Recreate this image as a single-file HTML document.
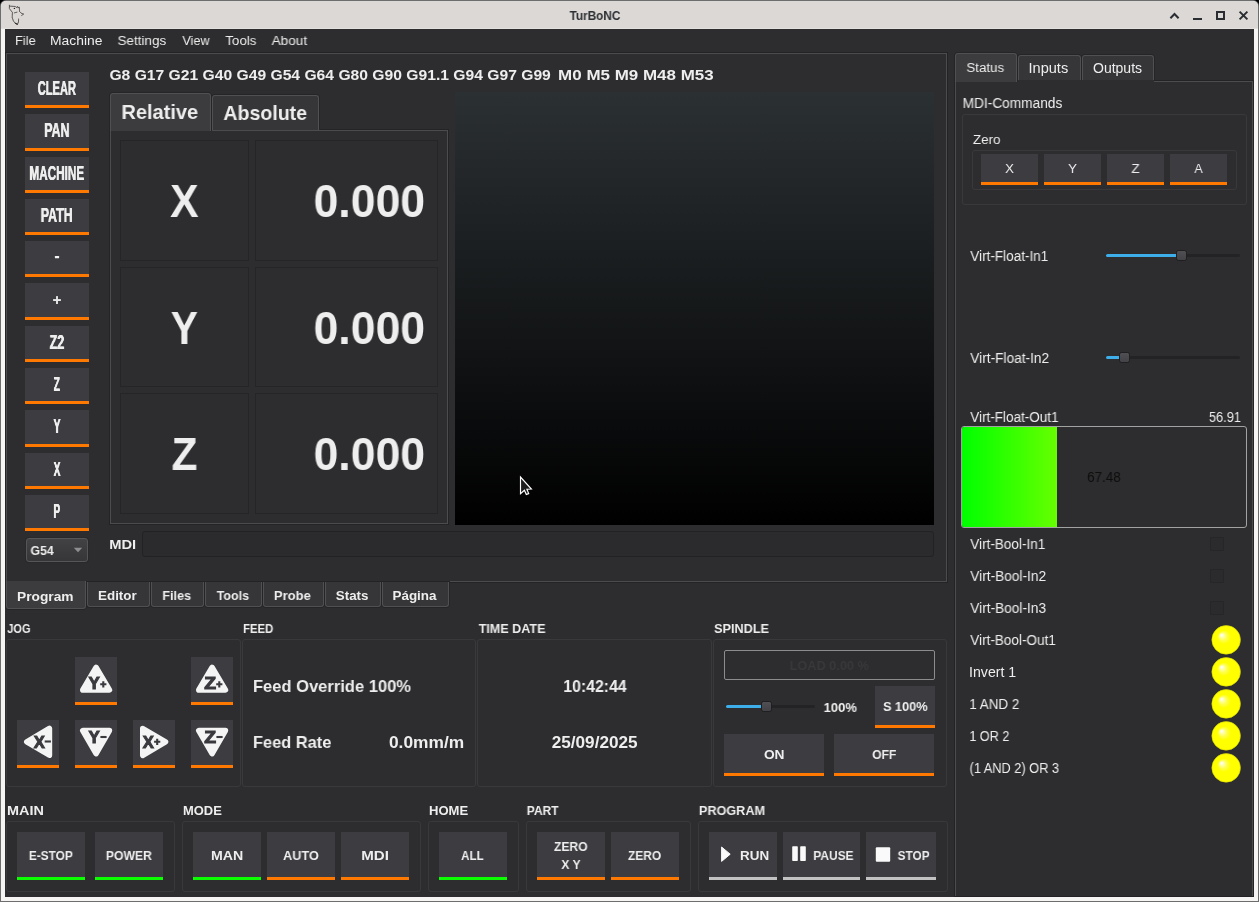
<!DOCTYPE html>
<html><head><meta charset="utf-8"><title>TurBoNC</title>
<style>
html,body{margin:0;padding:0;}
body{width:1259px;height:902px;position:relative;overflow:hidden;background:#000;font-family:"Liberation Sans",sans-serif;color:#eeeeee;}
div,span.t,svg{position:absolute;box-sizing:content-box;}
svg{will-change:transform;}
span.t{white-space:pre;transform-origin:0 50%;display:block;will-change:transform;}
</style></head><body>
<div style="left:0px;top:0px;width:1259px;height:902px;background:#6d6d6d;"></div>
<div style="left:0px;top:0px;width:6px;height:6px;background:#000;"></div>
<div style="left:1253px;top:0px;width:6px;height:6px;background:#000;"></div>
<div style="left:0px;top:0px;width:1259px;height:40px;background:#6d6d6d;border-radius:6px 6px 0 0;"></div>
<div style="left:1px;top:1px;width:1257px;height:900px;background:#f6f5f4;border-radius:5px 5px 0 0;"></div>
<div style="left:1px;top:1px;width:1257px;height:28px;background:#dbd8d5;border-radius:5px 5px 0 0;"></div>
<div style="left:1px;top:28px;width:1257px;height:1px;background:#e3e0dd;"></div>
<div style="left:5px;top:29px;width:1249px;height:868px;background:#2d2d2f;"></div>
<svg style="left:6px;top:2px" width="22" height="26" viewBox="6 2 22 26"><g fill="none" stroke="#2e2e2e" stroke-width="0.7" stroke-linecap="round" stroke-linejoin="round" stroke-dasharray="2.2 0.5"><path d="M9.4 5.2 L9.4 8.6 L12.4 12.4 L12.2 17.4 L13.4 21 L15.4 23.4 L17.4 24.4 L18.5 22 L18.6 19"/><path d="M9.6 6.1 L15.2 6.5 L17 7.6 L17.6 6.4 L18.2 7.8 L19.4 7.2 L19.5 11.4 L21.4 13.3 L23.6 14.1 L21.6 15.5"/><path d="M14.3 12.9 L17 12.2" stroke-width="0.9" stroke="#555"/><path d="M15.4 23.3 L17.6 24.3" stroke-width="1.1"/></g><circle cx="14.4" cy="8.4" r="0.7" fill="#222"/></svg>
<span class="t" style="left:569px;top:9px;font-size:12.65px;line-height:14px;font-weight:bold;color:#2b2f33;transform:translateX(0.62px) scaleX(0.9293);">TurBoNC</span>
<svg style="left:1160px;top:5px" width="96" height="22" viewBox="1160 5 96 22"><g fill="none" stroke="#2a2e32" stroke-width="2"><path d="M1170.4 18.2 L1174.5 14 L1178.6 18.2"/><path d="M1193 19 L1202 19"/><rect x="1217" y="12" width="7" height="7"/><path d="M1239.6 11.6 L1247.4 19.4 M1247.4 11.6 L1239.6 19.4"/></g></svg>
<span class="t" style="left:14px;top:33px;font-size:13.66px;line-height:15px;font-weight:normal;transform:translateX(1.00px) scaleX(0.9389);">File</span>
<span class="t" style="left:50px;top:33px;font-size:13.66px;line-height:15px;font-weight:normal;transform:translateX(0.01px) scaleX(1.0145);">Machine</span>
<span class="t" style="left:117px;top:33px;font-size:13.66px;line-height:15px;font-weight:normal;transform:translateX(0.53px) scaleX(0.9877);">Settings</span>
<span class="t" style="left:182px;top:33px;font-size:13.66px;line-height:15px;font-weight:normal;transform:translateX(0.39px) scaleX(0.9260);">View</span>
<span class="t" style="left:225px;top:33px;font-size:13.66px;line-height:15px;font-weight:normal;transform:translateX(0.36px) scaleX(0.9728);">Tools</span>
<span class="t" style="left:271px;top:33px;font-size:13.66px;line-height:15px;font-weight:normal;transform:translateX(0.62px) scaleX(0.9936);">About</span>
<div style="left:5px;top:52px;width:943px;height:1px;background:#232325;"></div>
<div style="left:6px;top:53px;width:941px;height:1px;background:#4c4c4e;"></div>
<div style="left:6px;top:53px;width:1px;height:529px;background:#4c4c4e;"></div>
<div style="left:946px;top:53px;width:1px;height:529px;background:#4c4c4e;"></div>
<div style="left:947px;top:53px;width:1px;height:530px;background:#232325;"></div>
<div style="left:5px;top:53px;width:1px;height:529px;background:#232325;"></div>
<div style="left:86px;top:581px;width:364px;height:1px;background:#232325;"></div>
<div style="left:450px;top:581px;width:497px;height:1px;background:#4c4c4e;"></div>
<div style="left:450px;top:582px;width:498px;height:1px;background:#232325;"></div>
<div style="left:25px;top:72px;width:64px;height:33px;background:#3d3c41;"></div>
<div style="left:25px;top:105px;width:64px;height:3px;background:#ff7900;"></div>
<span class="t" style="left:37px;top:78px;font-size:19.33px;line-height:21px;font-weight:bold;transform:translateX(0.74px) scaleX(0.5743);text-shadow:0.4px 0 0 #eee,-0.4px 0 0 #eee;">CLEAR</span>
<div style="left:25px;top:114px;width:64px;height:34px;background:#3d3c41;"></div>
<div style="left:25px;top:148px;width:64px;height:3px;background:#ff7900;"></div>
<span class="t" style="left:44px;top:120px;font-size:19.33px;line-height:21px;font-weight:bold;transform:translateX(0.17px) scaleX(0.6429);text-shadow:0.4px 0 0 #eee,-0.4px 0 0 #eee;">PAN</span>
<div style="left:25px;top:157px;width:64px;height:33px;background:#3d3c41;"></div>
<div style="left:25px;top:190px;width:64px;height:3px;background:#ff7900;"></div>
<span class="t" style="left:29px;top:163px;font-size:19.33px;line-height:21px;font-weight:bold;transform:translateX(0.41px) scaleX(0.6073);text-shadow:0.4px 0 0 #eee,-0.4px 0 0 #eee;">MACHINE</span>
<div style="left:25px;top:199px;width:64px;height:33px;background:#3d3c41;"></div>
<div style="left:25px;top:232px;width:64px;height:3px;background:#ff7900;"></div>
<span class="t" style="left:40px;top:205px;font-size:19.33px;line-height:21px;font-weight:bold;transform:translateX(0.77px) scaleX(0.6392);text-shadow:0.4px 0 0 #eee,-0.4px 0 0 #eee;">PATH</span>
<div style="left:25px;top:241px;width:64px;height:33px;background:#3d3c41;"></div>
<div style="left:25px;top:274px;width:64px;height:3px;background:#ff7900;"></div>
<div style="left:25px;top:283px;width:64px;height:34px;background:#3d3c41;"></div>
<div style="left:25px;top:317px;width:64px;height:3px;background:#ff7900;"></div>
<div style="left:25px;top:326px;width:64px;height:33px;background:#3d3c41;"></div>
<div style="left:25px;top:359px;width:64px;height:3px;background:#ff7900;"></div>
<span class="t" style="left:49px;top:332px;font-size:19.33px;line-height:21px;font-weight:bold;transform:translateX(0.63px) scaleX(0.6437);text-shadow:0.4px 0 0 #eee,-0.4px 0 0 #eee;">Z2</span>
<div style="left:25px;top:368px;width:64px;height:33px;background:#3d3c41;"></div>
<div style="left:25px;top:401px;width:64px;height:3px;background:#ff7900;"></div>
<span class="t" style="left:53px;top:374px;font-size:19.33px;line-height:21px;font-weight:bold;transform:translateX(0.69px) scaleX(0.5295);text-shadow:0.4px 0 0 #eee,-0.4px 0 0 #eee;">Z</span>
<div style="left:25px;top:410px;width:64px;height:34px;background:#3d3c41;"></div>
<div style="left:25px;top:444px;width:64px;height:3px;background:#ff7900;"></div>
<span class="t" style="left:53px;top:416px;font-size:19.33px;line-height:21px;font-weight:bold;transform:translateX(0.52px) scaleX(0.5426);text-shadow:0.4px 0 0 #eee,-0.4px 0 0 #eee;">Y</span>
<div style="left:25px;top:453px;width:64px;height:33px;background:#3d3c41;"></div>
<div style="left:25px;top:486px;width:64px;height:3px;background:#ff7900;"></div>
<span class="t" style="left:53px;top:459px;font-size:19.33px;line-height:21px;font-weight:bold;transform:translateX(0.61px) scaleX(0.5300);text-shadow:0.4px 0 0 #eee,-0.4px 0 0 #eee;">X</span>
<div style="left:25px;top:495px;width:64px;height:33px;background:#3d3c41;"></div>
<div style="left:25px;top:528px;width:64px;height:3px;background:#ff7900;"></div>
<span class="t" style="left:53px;top:501px;font-size:19.33px;line-height:21px;font-weight:bold;transform:translateX(0.65px) scaleX(0.4981);text-shadow:0.4px 0 0 #eee,-0.4px 0 0 #eee;">P</span>
<svg style="left:50px;top:250px" width="14" height="60" viewBox="50 250 14 60"><rect x="54.9" y="255.9" width="4.2" height="2.3" rx="0.5" fill="#f4f4f4"/><rect x="53.1" y="299.1" width="7.8" height="1.9" fill="#e6e6e6"/><rect x="56.05" y="296.1" width="1.9" height="7.9" fill="#e6e6e6"/></svg>
<span class="t" style="left:109px;top:66px;font-size:15.55px;line-height:17px;font-weight:bold;transform:translateX(0.41px) scaleX(1.0074);">G8 G17 G21 G40 G49 G54 G64 G80 G90 G91.1 G94 G97 G99</span>
<span class="t" style="left:558px;top:66px;font-size:15.55px;line-height:17px;font-weight:bold;transform:translateX(0.11px) scaleX(1.0912);">M0 M5 M9 M48 M53</span>
<div style="left:109px;top:129px;width:338px;height:394px;border:1px solid #232325;"></div>
<div style="left:110px;top:130px;width:336px;height:392px;border:1px solid #4c4c4e;"></div>
<div style="left:212px;top:95px;width:105px;height:34px;background:#363638;border:1px solid #505052;border-bottom:none;border-radius:3px 3px 0 0;box-shadow:0 -1px 0 #252527,1px 0 0 #252527,-1px 0 0 #252527;"></div>
<div style="left:110px;top:93px;width:99px;height:37px;background:#3c3c3e;border:1px solid #505052;border-bottom:none;border-radius:3px 3px 0 0;box-shadow:0 -1px 0 #252527,1px 0 0 #252527,-1px 0 0 #252527;"></div>
<span class="t" style="left:121px;top:100px;font-size:20.78px;line-height:23px;font-weight:bold;transform:translateX(0.41px) scaleX(0.9644);">Relative</span>
<span class="t" style="left:223px;top:101px;font-size:20.78px;line-height:23px;font-weight:bold;transform:translateX(0.36px) scaleX(0.9425);">Absolute</span>
<div style="left:120px;top:140px;width:127px;height:119px;border:1px solid #252527;"></div>
<div style="left:255px;top:140px;width:181px;height:119px;border:1px solid #252527;"></div>
<span class="t" style="left:170px;top:176px;font-size:45.64px;line-height:51px;font-weight:bold;transform:translateX(0.07px) scaleX(0.9369);">X</span>
<span class="t" style="left:313px;top:176px;font-size:45.64px;line-height:51px;font-weight:bold;transform:translateX(0.57px) scaleX(0.9770);">0.000</span>
<div style="left:120px;top:267px;width:127px;height:118px;border:1px solid #252527;"></div>
<div style="left:255px;top:267px;width:181px;height:118px;border:1px solid #252527;"></div>
<span class="t" style="left:170px;top:303px;font-size:45.64px;line-height:51px;font-weight:bold;transform:translateX(0.76px) scaleX(0.8899);">Y</span>
<span class="t" style="left:313px;top:303px;font-size:45.64px;line-height:51px;font-weight:bold;transform:translateX(0.57px) scaleX(0.9770);">0.000</span>
<div style="left:120px;top:393px;width:127px;height:119px;border:1px solid #252527;"></div>
<div style="left:255px;top:393px;width:181px;height:119px;border:1px solid #252527;"></div>
<span class="t" style="left:171px;top:429px;font-size:45.64px;line-height:51px;font-weight:bold;transform:translateX(0.48px) scaleX(0.9308);">Z</span>
<span class="t" style="left:313px;top:429px;font-size:45.64px;line-height:51px;font-weight:bold;transform:translateX(0.57px) scaleX(0.9770);">0.000</span>
<div style="left:455px;top:92px;width:479px;height:433px;background:linear-gradient(#2b3033,#000);"></div>
<svg style="left:518px;top:474px" width="18" height="24" viewBox="518 474 18 24"><path d="M520.5 477.0 L520.5 493.7 L524.4 490.2 L526.3 494.6 L528.7 493.6 L526.9 489.2 L531.4 489.0 Z" fill="#1d1d1d" stroke="#ffffff" stroke-width="1.15" stroke-linejoin="miter"/></svg>
<span class="t" style="left:109px;top:537px;font-size:13.37px;line-height:15px;font-weight:bold;transform:translateX(0.17px) scaleX(1.0982);">MDI</span>
<div style="left:142px;top:531px;width:790px;height:24px;background:#2b2b2d;border:1px solid #222224;border-radius:3px;"></div>
<div style="left:26px;top:538px;width:60px;height:22px;background:linear-gradient(#424244,#363638);border:1px solid #565658;border-radius:3px;box-shadow:0 0 0 1px #29292b;"></div>
<span class="t" style="left:30px;top:543px;font-size:13.08px;line-height:15px;font-weight:bold;transform:translateX(0.45px) scaleX(0.9390);">G54</span>
<svg style="left:73px;top:547px" width="10" height="6" viewBox="0 0 10 6"><path d="M0.8 0.8 L9.2 0.8 L5 5.2 Z" fill="#8e8e90"/></svg>
<div style="left:6px;top:581px;width:78px;height:27px;background:#3c3c3e;border:1px solid #505052;border-top:none;border-radius:0 0 3px 3px;box-shadow:0 1px 0 #252527,1px 0 0 #252527,-1px 0 0 #252527;"></div>
<span class="t" style="left:17px;top:589px;font-size:13.08px;line-height:15px;font-weight:bold;transform:translateX(0.03px) scaleX(1.0508);">Program</span>
<div style="left:87px;top:582px;width:61px;height:24px;background:#363638;border:1px solid #505052;border-top:none;border-radius:0 0 3px 3px;box-shadow:0 1px 0 #252527,1px 0 0 #252527,-1px 0 0 #252527;"></div>
<span class="t" style="left:98px;top:588px;font-size:13.08px;line-height:15px;font-weight:bold;transform:translateX(0.05px) scaleX(1.0226);">Editor</span>
<div style="left:151px;top:582px;width:51px;height:24px;background:#363638;border:1px solid #505052;border-top:none;border-radius:0 0 3px 3px;box-shadow:0 1px 0 #252527,1px 0 0 #252527,-1px 0 0 #252527;"></div>
<span class="t" style="left:162px;top:588px;font-size:13.08px;line-height:15px;font-weight:bold;transform:translateX(0.30px) scaleX(0.9666);">Files</span>
<div style="left:205px;top:582px;width:55px;height:24px;background:#363638;border:1px solid #505052;border-top:none;border-radius:0 0 3px 3px;box-shadow:0 1px 0 #252527,1px 0 0 #252527,-1px 0 0 #252527;"></div>
<span class="t" style="left:216px;top:588px;font-size:13.08px;line-height:15px;font-weight:bold;transform:translateX(0.71px) scaleX(0.9525);">Tools</span>
<div style="left:263px;top:582px;width:59px;height:24px;background:#363638;border:1px solid #505052;border-top:none;border-radius:0 0 3px 3px;box-shadow:0 1px 0 #252527,1px 0 0 #252527,-1px 0 0 #252527;"></div>
<span class="t" style="left:273px;top:588px;font-size:13.08px;line-height:15px;font-weight:bold;transform:translateX(0.88px) scaleX(0.9972);">Probe</span>
<div style="left:325px;top:582px;width:54px;height:24px;background:#363638;border:1px solid #505052;border-top:none;border-radius:0 0 3px 3px;box-shadow:0 1px 0 #252527,1px 0 0 #252527,-1px 0 0 #252527;"></div>
<span class="t" style="left:335px;top:588px;font-size:13.08px;line-height:15px;font-weight:bold;transform:translateX(0.86px) scaleX(1.0187);">Stats</span>
<div style="left:382px;top:582px;width:65px;height:24px;background:#363638;border:1px solid #505052;border-top:none;border-radius:0 0 3px 3px;box-shadow:0 1px 0 #252527,1px 0 0 #252527,-1px 0 0 #252527;"></div>
<span class="t" style="left:392px;top:588px;font-size:13.08px;line-height:15px;font-weight:bold;transform:translateX(0.45px) scaleX(1.0274);">Página</span>
<span class="t" style="left:7px;top:621px;font-size:12.79px;line-height:15px;font-weight:bold;transform:translateX(0.28px) scaleX(0.8625);">JOG</span>
<span class="t" style="left:243px;top:621px;font-size:12.79px;line-height:15px;font-weight:bold;transform:translateX(0.09px) scaleX(0.8879);">FEED</span>
<span class="t" style="left:478px;top:621px;font-size:12.79px;line-height:15px;font-weight:bold;transform:translateX(0.71px) scaleX(0.9825);">TIME DATE</span>
<span class="t" style="left:714px;top:621px;font-size:12.79px;line-height:15px;font-weight:bold;transform:translateX(0.08px) scaleX(0.9924);">SPINDLE</span>
<div style="left:6px;top:639px;width:233px;height:146px;border:1px solid #39393b;border-radius:3px;"></div>
<div style="left:242px;top:639px;width:232px;height:146px;border:1px solid #39393b;border-radius:3px;"></div>
<div style="left:477px;top:639px;width:233px;height:146px;border:1px solid #39393b;border-radius:3px;"></div>
<div style="left:713px;top:639px;width:232px;height:146px;border:1px solid #39393b;border-radius:3px;"></div>
<div style="left:75px;top:657px;width:42px;height:45px;background:#3d3c41;"></div>
<div style="left:75px;top:702px;width:42px;height:3px;background:#ff7900;"></div>
<svg style="left:75px;top:657px" width="42" height="45" viewBox="0 0 42 45"><polygon points="21.1,10.4 34.4,32.9 7.8,32.9" fill="#f4f4f4" stroke="#f4f4f4" stroke-width="5.6" stroke-linejoin="round"/><text x="19.2" y="32.5" text-anchor="middle" font-family="Liberation Sans, sans-serif" font-weight="bold" font-size="16.1" fill="#3a393e" stroke="#3a393e" stroke-width="1.0" transform="translate(19.2 0) scale(1.05 1) translate(-19.2 0)">Y</text><path d="M25.2 27.3 H31.400000000000002 M28.3 24.2 V30.400000000000002" stroke="#3a393e" stroke-width="2.1" fill="none"/></svg>
<div style="left:191px;top:657px;width:42px;height:45px;background:#3d3c41;"></div>
<div style="left:191px;top:702px;width:42px;height:3px;background:#ff7900;"></div>
<svg style="left:191px;top:657px" width="42" height="45" viewBox="0 0 42 45"><polygon points="21.1,10.4 34.4,32.9 7.8,32.9" fill="#f4f4f4" stroke="#f4f4f4" stroke-width="5.6" stroke-linejoin="round"/><text x="19.2" y="32.5" text-anchor="middle" font-family="Liberation Sans, sans-serif" font-weight="bold" font-size="16.1" fill="#3a393e" stroke="#3a393e" stroke-width="1.0" transform="translate(19.2 0) scale(1.2 1) translate(-19.2 0)">Z</text><path d="M25.2 27.3 H31.400000000000002 M28.3 24.2 V30.400000000000002" stroke="#3a393e" stroke-width="2.1" fill="none"/></svg>
<div style="left:17px;top:720px;width:42px;height:45px;background:#3d3c41;"></div>
<div style="left:17px;top:765px;width:42px;height:3px;background:#ff7900;"></div>
<svg style="left:17px;top:720px" width="42" height="45" viewBox="0 0 42 45"><polygon points="9.8,21.8 32.4,8.4 32.4,35.2" fill="#f4f4f4" stroke="#f4f4f4" stroke-width="5.6" stroke-linejoin="round"/><text x="22.2" y="27.6" text-anchor="middle" font-family="Liberation Sans, sans-serif" font-weight="bold" font-size="16.1" fill="#3a393e" stroke="#3a393e" stroke-width="1.0" transform="translate(22.2 0) scale(1.03 1) translate(-22.2 0)">X</text><path d="M27.7 21.5 H33.9" stroke="#3a393e" stroke-width="2.1" fill="none"/></svg>
<div style="left:75px;top:720px;width:42px;height:45px;background:#3d3c41;"></div>
<div style="left:75px;top:765px;width:42px;height:3px;background:#ff7900;"></div>
<svg style="left:75px;top:720px" width="42" height="45" viewBox="0 0 42 45"><polygon points="7.8,10.6 34.4,10.6 21.1,33.5" fill="#f4f4f4" stroke="#f4f4f4" stroke-width="5.6" stroke-linejoin="round"/><text x="19.2" y="23.1" text-anchor="middle" font-family="Liberation Sans, sans-serif" font-weight="bold" font-size="16.1" fill="#3a393e" stroke="#3a393e" stroke-width="1.0" transform="translate(19.2 0) scale(1.05 1) translate(-19.2 0)">Y</text><path d="M25.4 17.0 H31.6" stroke="#3a393e" stroke-width="2.1" fill="none"/></svg>
<div style="left:133px;top:720px;width:42px;height:45px;background:#3d3c41;"></div>
<div style="left:133px;top:765px;width:42px;height:3px;background:#ff7900;"></div>
<svg style="left:133px;top:720px" width="42" height="45" viewBox="0 0 42 45"><polygon points="9.8,8.6 32.5,21.9 9.8,35.3" fill="#f4f4f4" stroke="#f4f4f4" stroke-width="5.6" stroke-linejoin="round"/><text x="15.2" y="27.6" text-anchor="middle" font-family="Liberation Sans, sans-serif" font-weight="bold" font-size="16.1" fill="#3a393e" stroke="#3a393e" stroke-width="1.0" transform="translate(15.2 0) scale(1.03 1) translate(-15.2 0)">X</text><path d="M21.099999999999998 21.8 H27.3 M24.2 18.7 V24.900000000000002" stroke="#3a393e" stroke-width="2.1" fill="none"/></svg>
<div style="left:191px;top:720px;width:42px;height:45px;background:#3d3c41;"></div>
<div style="left:191px;top:765px;width:42px;height:3px;background:#ff7900;"></div>
<svg style="left:191px;top:720px" width="42" height="45" viewBox="0 0 42 45"><polygon points="7.8,10.6 34.4,10.6 21.1,33.5" fill="#f4f4f4" stroke="#f4f4f4" stroke-width="5.6" stroke-linejoin="round"/><text x="19.2" y="23.1" text-anchor="middle" font-family="Liberation Sans, sans-serif" font-weight="bold" font-size="16.1" fill="#3a393e" stroke="#3a393e" stroke-width="1.0" transform="translate(19.2 0) scale(1.2 1) translate(-19.2 0)">Z</text><path d="M25.4 17.0 H31.6" stroke="#3a393e" stroke-width="2.1" fill="none"/></svg>
<span class="t" style="left:252px;top:677px;font-size:16.57px;line-height:19px;font-weight:bold;transform:translateX(0.94px) scaleX(0.9980);">Feed Override 100%</span>
<span class="t" style="left:252px;top:733px;font-size:16.86px;line-height:19px;font-weight:bold;transform:translateX(0.95px) scaleX(0.9731);">Feed Rate</span>
<span class="t" style="left:388px;top:733px;font-size:16.86px;line-height:19px;font-weight:bold;transform:translateX(0.96px) scaleX(1.0291);">0.0mm/m</span>
<span class="t" style="left:563px;top:677px;font-size:16.57px;line-height:19px;font-weight:bold;transform:translateX(0.25px) scaleX(0.9563);">10:42:44</span>
<span class="t" style="left:551px;top:733px;font-size:16.86px;line-height:19px;font-weight:bold;transform:translateX(0.65px) scaleX(1.0195);">25/09/2025</span>
<div style="left:724px;top:650px;width:209px;height:28px;border:1px solid #8c8c8c;border-radius:2px;"></div>
<span class="t" style="left:789px;top:658px;font-size:13.23px;line-height:15px;font-weight:bold;color:#39393b;transform:translateX(0.60px) scaleX(0.9637);">LOAD 0.00 %</span>
<div style="left:726px;top:705px;width:89px;height:3px;background:#232325;border-radius:1.5px;"></div>
<div style="left:726px;top:705px;width:37px;height:3px;background:#3daee9;border-radius:1.5px;"></div>
<div style="left:761px;top:701px;width:9px;height:9px;background:linear-gradient(#505054,#434347);border:1px solid #1f1f21;border-radius:2.5px;"></div>
<span class="t" style="left:823px;top:700px;font-size:13.52px;line-height:15px;font-weight:bold;transform:translateX(0.63px) scaleX(0.9637);">100%</span>
<div style="left:875px;top:686px;width:60px;height:39px;background:#3d3c41;"></div>
<div style="left:875px;top:725px;width:60px;height:3px;background:#ff7900;"></div>
<span class="t" style="left:883px;top:699px;font-size:13.37px;line-height:15px;font-weight:bold;transform:translateX(0.08px) scaleX(0.9492);">S 100%</span>
<div style="left:724px;top:734px;width:100px;height:39px;background:#3d3c41;"></div>
<div style="left:724px;top:773px;width:100px;height:3px;background:#ff7900;"></div>
<div style="left:834px;top:734px;width:100px;height:39px;background:#3d3c41;"></div>
<div style="left:834px;top:773px;width:100px;height:3px;background:#ff7900;"></div>
<span class="t" style="left:763px;top:747px;font-size:13.23px;line-height:15px;font-weight:bold;transform:translateX(0.89px) scaleX(1.0401);">ON</span>
<span class="t" style="left:872px;top:747px;font-size:13.23px;line-height:15px;font-weight:bold;transform:translateX(0.15px) scaleX(0.9185);">OFF</span>
<span class="t" style="left:6px;top:803px;font-size:12.94px;line-height:15px;font-weight:bold;transform:translateX(0.98px) scaleX(1.1160);">MAIN</span>
<span class="t" style="left:182px;top:803px;font-size:12.94px;line-height:15px;font-weight:bold;transform:translateX(0.98px) scaleX(1.0003);">MODE</span>
<span class="t" style="left:428px;top:803px;font-size:12.94px;line-height:15px;font-weight:bold;transform:translateX(0.98px) scaleX(1.0084);">HOME</span>
<span class="t" style="left:526px;top:803px;font-size:12.94px;line-height:15px;font-weight:bold;transform:translateX(0.74px) scaleX(0.9309);">PART</span>
<span class="t" style="left:698px;top:803px;font-size:12.94px;line-height:15px;font-weight:bold;transform:translateX(0.90px) scaleX(0.9792);">PROGRAM</span>
<div style="left:6px;top:821px;width:167px;height:69px;border:1px solid #39393b;border-radius:3px;"></div>
<div style="left:182px;top:821px;width:237px;height:69px;border:1px solid #39393b;border-radius:3px;"></div>
<div style="left:428px;top:821px;width:89px;height:69px;border:1px solid #39393b;border-radius:3px;"></div>
<div style="left:526px;top:821px;width:163px;height:69px;border:1px solid #39393b;border-radius:3px;"></div>
<div style="left:698px;top:821px;width:248px;height:69px;border:1px solid #39393b;border-radius:3px;"></div>
<div style="left:17px;top:832px;width:68px;height:45px;background:#3d3c41;"></div>
<div style="left:17px;top:877px;width:68px;height:3px;background:#0bff00;"></div>
<span class="t" style="left:28px;top:848px;font-size:13.08px;line-height:15px;font-weight:bold;transform:translateX(0.86px) scaleX(0.9068);">E-STOP</span>
<div style="left:95px;top:832px;width:68px;height:45px;background:#3d3c41;"></div>
<div style="left:95px;top:877px;width:68px;height:3px;background:#0bff00;"></div>
<span class="t" style="left:105px;top:848px;font-size:13.08px;line-height:15px;font-weight:bold;transform:translateX(0.83px) scaleX(0.9312);">POWER</span>
<div style="left:193px;top:832px;width:68px;height:45px;background:#3d3c41;"></div>
<div style="left:193px;top:877px;width:68px;height:3px;background:#0bff00;"></div>
<span class="t" style="left:210px;top:848px;font-size:13.08px;line-height:15px;font-weight:bold;transform:translateX(0.90px) scaleX(1.0826);">MAN</span>
<div style="left:267px;top:832px;width:68px;height:45px;background:#3d3c41;"></div>
<div style="left:267px;top:877px;width:68px;height:3px;background:#ff7900;"></div>
<span class="t" style="left:283px;top:848px;font-size:13.08px;line-height:15px;font-weight:bold;transform:translateX(0.03px) scaleX(0.9695);">AUTO</span>
<div style="left:341px;top:832px;width:68px;height:45px;background:#3d3c41;"></div>
<div style="left:341px;top:877px;width:68px;height:3px;background:#ff7900;"></div>
<span class="t" style="left:361px;top:848px;font-size:13.08px;line-height:15px;font-weight:bold;transform:translateX(0.13px) scaleX(1.1586);">MDI</span>
<div style="left:439px;top:832px;width:68px;height:45px;background:#3d3c41;"></div>
<div style="left:439px;top:877px;width:68px;height:3px;background:#0bff00;"></div>
<span class="t" style="left:461px;top:848px;font-size:13.08px;line-height:15px;font-weight:bold;transform:translateX(0.06px) scaleX(0.8887);">ALL</span>
<div style="left:537px;top:832px;width:68px;height:45px;background:#3d3c41;"></div>
<div style="left:537px;top:877px;width:68px;height:3px;background:#ff7900;"></div>
<div style="left:611px;top:832px;width:68px;height:45px;background:#3d3c41;"></div>
<div style="left:611px;top:877px;width:68px;height:3px;background:#ff7900;"></div>
<span class="t" style="left:627px;top:848px;font-size:13.08px;line-height:15px;font-weight:bold;transform:translateX(0.99px) scaleX(0.9111);">ZERO</span>
<div style="left:709px;top:832px;width:68px;height:45px;background:#3d3c41;"></div>
<div style="left:709px;top:877px;width:68px;height:3px;background:#c2c2c2;"></div>
<span class="t" style="left:740px;top:848px;font-size:13.08px;line-height:15px;font-weight:bold;transform:translateX(0.05px) scaleX(1.0252);">RUN</span>
<div style="left:783px;top:832px;width:77px;height:45px;background:#3d3c41;"></div>
<div style="left:783px;top:877px;width:77px;height:3px;background:#c2c2c2;"></div>
<span class="t" style="left:813px;top:848px;font-size:13.08px;line-height:15px;font-weight:bold;transform:translateX(0.25px) scaleX(0.9143);">PAUSE</span>
<div style="left:866px;top:832px;width:70px;height:45px;background:#3d3c41;"></div>
<div style="left:866px;top:877px;width:70px;height:3px;background:#c2c2c2;"></div>
<span class="t" style="left:897px;top:848px;font-size:13.08px;line-height:15px;font-weight:bold;transform:translateX(0.61px) scaleX(0.9013);">STOP</span>
<span class="t" style="left:553px;top:839px;font-size:13.37px;line-height:15px;font-weight:bold;transform:translateX(0.99px) scaleX(0.9051);">ZERO</span>
<span class="t" style="left:561px;top:857px;font-size:13.37px;line-height:15px;font-weight:bold;transform:translateX(0.34px) scaleX(0.8984);">X Y</span>
<svg style="left:718px;top:843px" width="180" height="22" viewBox="718 843 180 22"><path d="M721.6 847 L730.2 854.2 L721.6 861.4 Z" fill="#fafafa" stroke="#fafafa" stroke-width="1" stroke-linejoin="round"/><rect x="792.2" y="846.2" width="5.6" height="14.8" rx="0.8" fill="#fafafa"/><rect x="800.2" y="846.2" width="5.6" height="14.8" rx="0.8" fill="#fafafa"/><rect x="875.8" y="847.2" width="14.4" height="14.6" rx="1" fill="#fafafa"/></svg>
<div style="left:954px;top:80px;width:298px;height:815px;border:1px solid #232325;"></div>
<div style="left:955px;top:81px;width:296px;height:814px;border:1px solid #4c4c4e;border-bottom:none;"></div>
<div style="left:1017px;top:80px;width:137px;height:2px;background:#2d2d2f;"></div>
<div style="left:955px;top:53px;width:60px;height:28px;background:#3c3c3e;border:1px solid #505052;border-bottom:none;border-radius:3px 3px 0 0;box-shadow:0 -1px 0 #252527,1px 0 0 #252527,-1px 0 0 #252527;"></div>
<span class="t" style="left:966px;top:60px;font-size:13.66px;line-height:15px;font-weight:normal;transform:translateX(0.44px) scaleX(0.9717);">Status</span>
<div style="left:1018px;top:55px;width:61px;height:24px;background:#363638;border:1px solid #505052;border-bottom:none;border-radius:3px 3px 0 0;box-shadow:0 -1px 0 #252527,1px 0 0 #252527,-1px 0 0 #252527;"></div>
<span class="t" style="left:1028px;top:61px;font-size:13.81px;line-height:15px;font-weight:normal;transform:translateX(0.51px) scaleX(1.0559);">Inputs</span>
<div style="left:1082px;top:55px;width:70px;height:24px;background:#363638;border:1px solid #505052;border-bottom:none;border-radius:3px 3px 0 0;box-shadow:0 -1px 0 #252527,1px 0 0 #252527,-1px 0 0 #252527;"></div>
<span class="t" style="left:1092px;top:61px;font-size:13.81px;line-height:15px;font-weight:normal;transform:translateX(0.99px) scaleX(1.0157);">Outputs</span>
<span class="t" style="left:962px;top:96px;font-size:13.81px;line-height:15px;font-weight:normal;transform:translateX(0.63px) scaleX(0.9926);">MDI-Commands</span>
<div style="left:962px;top:114px;width:283px;height:89px;border:1px solid #39393b;border-radius:3px;"></div>
<span class="t" style="left:972px;top:132px;font-size:13.52px;line-height:15px;font-weight:normal;transform:translateX(0.92px) scaleX(0.9910);">Zero</span>
<div style="left:972px;top:150px;width:263px;height:38px;border:1px solid #39393b;border-radius:3px;"></div>
<div style="left:981px;top:154px;width:57px;height:28px;background:#3d3c41;"></div>
<div style="left:981px;top:182px;width:57px;height:3px;background:#ff7900;"></div>
<span class="t" style="left:1005px;top:161px;font-size:13.52px;line-height:15px;font-weight:normal;transform:translateX(0.14px) scaleX(0.9697);">X</span>
<div style="left:1044px;top:154px;width:57px;height:28px;background:#3d3c41;"></div>
<div style="left:1044px;top:182px;width:57px;height:3px;background:#ff7900;"></div>
<span class="t" style="left:1068px;top:161px;font-size:13.52px;line-height:15px;font-weight:normal;transform:translateX(0.15px) scaleX(0.9697);">Y</span>
<div style="left:1107px;top:154px;width:57px;height:28px;background:#3d3c41;"></div>
<div style="left:1107px;top:182px;width:57px;height:3px;background:#ff7900;"></div>
<span class="t" style="left:1131px;top:161px;font-size:13.52px;line-height:15px;font-weight:normal;transform:translateX(0.39px) scaleX(0.9999);">Z</span>
<div style="left:1170px;top:154px;width:57px;height:28px;background:#3d3c41;"></div>
<div style="left:1170px;top:182px;width:57px;height:3px;background:#ff7900;"></div>
<span class="t" style="left:1194px;top:161px;font-size:13.52px;line-height:15px;font-weight:normal;transform:translateX(0.42px) scaleX(0.9112);">A</span>
<span class="t" style="left:970px;top:248px;font-size:13.95px;line-height:16px;font-weight:normal;transform:translateX(0.28px) scaleX(0.9713);">Virt-Float-In1</span>
<div style="left:1106px;top:254px;width:134px;height:3px;background:#232325;border-radius:1.5px;"></div>
<div style="left:1106px;top:254px;width:72px;height:3px;background:#3daee9;border-radius:1.5px;"></div>
<div style="left:1176px;top:250px;width:9px;height:9px;background:linear-gradient(#505054,#434347);border:1px solid #1f1f21;border-radius:2.5px;"></div>
<span class="t" style="left:970px;top:350px;font-size:13.95px;line-height:16px;font-weight:normal;transform:translateX(0.28px) scaleX(0.9816);">Virt-Float-In2</span>
<div style="left:1106px;top:356px;width:134px;height:3px;background:#232325;border-radius:1.5px;"></div>
<div style="left:1106px;top:356px;width:15px;height:3px;background:#3daee9;border-radius:1.5px;"></div>
<div style="left:1119px;top:352px;width:9px;height:9px;background:linear-gradient(#505054,#434347);border:1px solid #1f1f21;border-radius:2.5px;"></div>
<span class="t" style="left:970px;top:409px;font-size:13.95px;line-height:16px;font-weight:normal;transform:translateX(0.28px) scaleX(0.9675);">Virt-Float-Out1</span>
<span class="t" style="left:1208px;top:409px;font-size:13.95px;line-height:16px;font-weight:normal;transform:translateX(0.94px) scaleX(0.9163);">56.91</span>
<div style="left:961px;top:426px;width:284px;height:100px;border:1px solid #a2a2a2;border-radius:3px;"></div>
<div style="left:962px;top:427px;width:95px;height:100px;background:linear-gradient(90deg,#00ff00,#66ff00);border-radius:2px 0 0 2px;"></div>
<span class="t" style="left:1087px;top:469px;font-size:13.95px;line-height:16px;font-weight:normal;color:#0e0e0e;transform:translateX(0.17px) scaleX(0.9568);">67.48</span>
<span class="t" style="left:970px;top:536px;font-size:13.95px;line-height:16px;font-weight:normal;transform:translateX(0.28px) scaleX(0.9715);">Virt-Bool-In1</span>
<div style="left:1210px;top:537px;width:12px;height:12px;background:#2b2b2d;border:1px solid #262628;border-radius:1px;"></div>
<span class="t" style="left:970px;top:568px;font-size:13.95px;line-height:16px;font-weight:normal;transform:translateX(0.28px) scaleX(0.9821);">Virt-Bool-In2</span>
<div style="left:1210px;top:569px;width:12px;height:12px;background:#2b2b2d;border:1px solid #262628;border-radius:1px;"></div>
<span class="t" style="left:970px;top:600px;font-size:13.95px;line-height:16px;font-weight:normal;transform:translateX(0.28px) scaleX(0.9810);">Virt-Bool-In3</span>
<div style="left:1210px;top:601px;width:12px;height:12px;background:#2b2b2d;border:1px solid #262628;border-radius:1px;"></div>
<span class="t" style="left:970px;top:632px;font-size:13.95px;line-height:16px;font-weight:normal;transform:translateX(0.28px) scaleX(0.9721);">Virt-Bool-Out1</span>
<span class="t" style="left:969px;top:664px;font-size:13.95px;line-height:16px;font-weight:normal;transform:translateX(0.05px) scaleX(1.0153);">Invert 1</span>
<span class="t" style="left:969px;top:696px;font-size:13.95px;line-height:16px;font-weight:normal;transform:translateX(0.33px) scaleX(0.9611);">1 AND 2</span>
<span class="t" style="left:969px;top:728px;font-size:13.95px;line-height:16px;font-weight:normal;transform:translateX(0.39px) scaleX(0.9035);">1 OR 2</span>
<span class="t" style="left:969px;top:760px;font-size:13.95px;line-height:16px;font-weight:normal;transform:translateX(0.56px) scaleX(0.9171);">(1 AND 2) OR 3</span>
<svg style="left:1205px;top:620px" width="42" height="170" viewBox="1205 620 42 170"><defs><radialGradient id="ledg" gradientUnits="userSpaceOnUse" cx="-2.1" cy="-2.6" r="6.8" fx="-5.0" fy="-5.0"><stop offset="0" stop-color="#ffffff"/><stop offset="0.18" stop-color="#ffffd0"/><stop offset="0.55" stop-color="#ffff58"/><stop offset="1" stop-color="#ffff00"/></radialGradient></defs><g transform="translate(1226.15 639.85)"><circle r="14.3" fill="#ffff00" stroke="#d6d600" stroke-width="0.6"/><circle cx="-2.1" cy="-2.6" r="6.8" fill="url(#ledg)"/></g><g transform="translate(1226.15 671.85)"><circle r="14.3" fill="#ffff00" stroke="#d6d600" stroke-width="0.6"/><circle cx="-2.1" cy="-2.6" r="6.8" fill="url(#ledg)"/></g><g transform="translate(1226.15 703.85)"><circle r="14.3" fill="#ffff00" stroke="#d6d600" stroke-width="0.6"/><circle cx="-2.1" cy="-2.6" r="6.8" fill="url(#ledg)"/></g><g transform="translate(1226.15 735.85)"><circle r="14.3" fill="#ffff00" stroke="#d6d600" stroke-width="0.6"/><circle cx="-2.1" cy="-2.6" r="6.8" fill="url(#ledg)"/></g><g transform="translate(1226.15 767.85)"><circle r="14.3" fill="#ffff00" stroke="#d6d600" stroke-width="0.6"/><circle cx="-2.1" cy="-2.6" r="6.8" fill="url(#ledg)"/></g></svg>
</body></html>
